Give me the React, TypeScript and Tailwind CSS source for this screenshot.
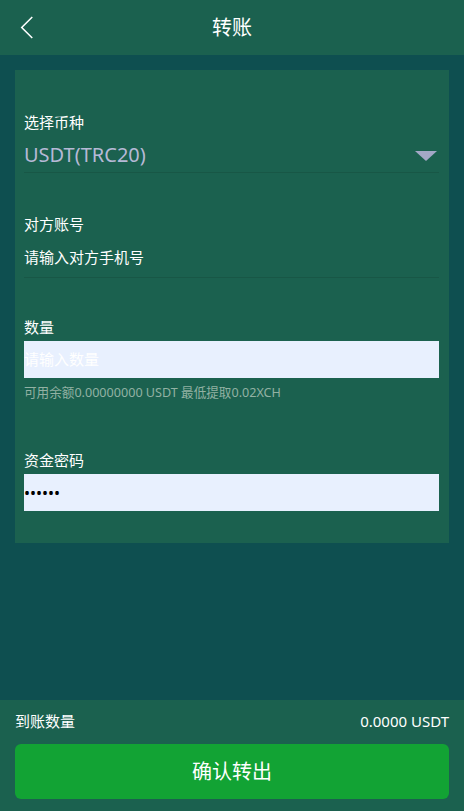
export default function App() {
  return (
    <div
      className="flex min-h-screen flex-col bg-[#0e4f50] text-white"
      style={{ fontFamily: '"Noto Sans", "Noto Sans CJK SC", sans-serif' }}
    >
      <header className="relative flex h-[55px] items-center justify-center bg-[#1b614f]">
        <button className="absolute left-[18px] top-[15px] flex h-[25px] w-[18px] items-center justify-center">
          <svg viewBox="0 0 14 24" className="h-[23px] w-[14px]" fill="none" stroke="white" strokeWidth="1.6">
            <path d="M12.5 1 L1.5 12 L12.5 23" />
          </svg>
        </button>
        <h1 className="text-[20px] leading-none">转账</h1>
      </header>

      <main className="flex-1 px-[15px] pt-[15px]">
        <section className="bg-[#1b614f] pb-[32px] pl-[9px] pr-[10px] pt-[42px]">
          <div className="text-[15px] leading-[20px]">选择币种</div>
          <div className="flex h-[41px] items-start justify-between border-b border-[#185746] pt-[8px]">
            <span className="text-[20px] leading-[30px] text-[#b6b9d6]">USDT(TRC20)</span>
            <svg viewBox="0 0 22 10" className="mr-[2px] mt-[11px] h-[10px] w-[22px]">
              <polygon points="0,0 22,0 11,10" fill="#a3a8c6" />
            </svg>
          </div>

          <div className="mt-[41px] text-[15px] leading-[20px]">对方账号</div>
          <div className="flex h-[44px] items-start border-b border-[#185746] pt-[8px] text-[15px] leading-[30px]">
            请输入对方手机号
          </div>

          <div className="mt-[39px] text-[15px] leading-[20px]">数量</div>
          <div className="mt-[4px] flex h-[37px] items-center bg-[#e8f0fe] text-[15px] text-white">请输入数量</div>
          <div className="mt-[7px] text-[12.6px] leading-[16px] text-[#92b1a3]">
            可用余额0.00000000 USDT 最低提取0.02XCH
          </div>

          <div className="mt-[49px] text-[15px] leading-[20px]">资金密码</div>
          <div className="mt-[4px] flex h-[37px] items-center bg-[#e8f0fe] text-[16px] text-black">
            ••••••
          </div>
        </section>
      </main>

      <footer className="bg-[#1b614f] px-[15px] pb-[12px] pt-[11px]">
        <div className="flex items-center justify-between text-[15px] leading-[20px]">
          <span>到账数量</span>
          <span>0.0000 USDT</span>
        </div>
        <button className="mt-[13px] flex h-[55px] w-full items-center justify-center rounded-[6px] bg-[#12a334] text-[20px]">
          确认转出
        </button>
      </footer>
    </div>
  );
}
